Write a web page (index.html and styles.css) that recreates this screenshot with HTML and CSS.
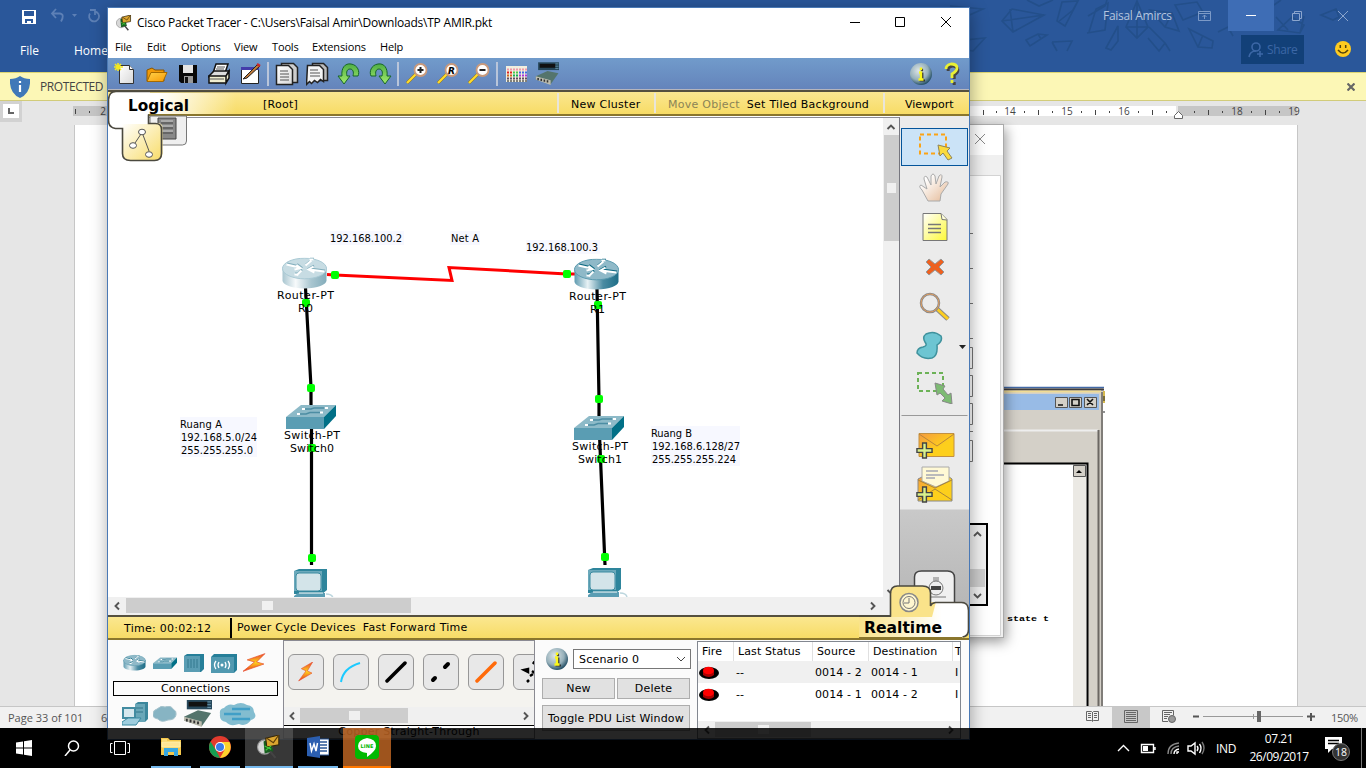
FILE: index.html
```html
<!DOCTYPE html>
<html lang="en">
<head>
<meta charset="utf-8">
<title>Cisco Packet Tracer</title>
<link rel="stylesheet" href="styles.css">
</head>
<body>
<svg class="defs" aria-hidden="true">
  <defs>
    <linearGradient id="gBody" x1="0" x2="1"><stop offset="0" stop-color="#5f9bb0"/><stop offset=".3" stop-color="#e8f2f5"/><stop offset=".65" stop-color="#4a8ba2"/><stop offset="1" stop-color="#1e6e87"/></linearGradient>
    <linearGradient id="gBodyLight" x1="0" x2="1"><stop offset="0" stop-color="#a9c6d0"/><stop offset=".3" stop-color="#f7fafb"/><stop offset=".65" stop-color="#a9c6d0"/><stop offset="1" stop-color="#84adbb"/></linearGradient>
    <linearGradient id="gYellow" x1="0" y1="0" x2="1" y2="1"><stop offset="0" stop-color="#fff"/><stop offset="1" stop-color="#f8dc68"/></linearGradient>
    <linearGradient id="gFade" x1="0" x2="1"><stop offset="0" stop-color="#fff"/><stop offset=".35" stop-color="#fff"/><stop offset="1" stop-color="#fff" stop-opacity="0"/></linearGradient>
    <linearGradient id="gFadeR" gradientUnits="userSpaceOnUse" x1="859" y1="0" x2="969" y2="0"><stop offset="0" stop-color="#fff" stop-opacity="0"/><stop offset=".3" stop-color="#fff" stop-opacity=".35"/><stop offset=".75" stop-color="#fff"/></linearGradient>
    <linearGradient id="gNote" x1="0" y1="0" x2="1" y2="1"><stop offset="0" stop-color="#fff"/><stop offset="1" stop-color="#fdf935"/></linearGradient>
    <linearGradient id="gHand" x1="0" y1="0" x2="1" y2="1"><stop offset=".2" stop-color="#fff"/><stop offset="1" stop-color="#e3b793"/></linearGradient>
    <linearGradient id="gMail" x1="0" y1="0" x2="1" y2="1"><stop offset="0" stop-color="#f59a40"/><stop offset=".6" stop-color="#fdcf1c"/></linearGradient>
    <linearGradient id="gFolder" x1="0" y1="0" x2="1" y2="1"><stop offset="0" stop-color="#ffd24a"/><stop offset="1" stop-color="#f79a05"/></linearGradient>
    <linearGradient id="gPaper" x1="0" y1="0" x2="1" y2="1"><stop offset="0" stop-color="#fff"/><stop offset="1" stop-color="#d8d8d8"/></linearGradient>
    <linearGradient id="gGreen" x1="0" y1="0" x2="0" y2="1"><stop offset="0" stop-color="#4fae45"/><stop offset="1" stop-color="#a4ec6c"/></linearGradient>
    <linearGradient id="gBolt" x1="0" y1="0" x2="0" y2="1"><stop offset="0" stop-color="#e8452a"/><stop offset=".5" stop-color="#ffd21e"/><stop offset="1" stop-color="#e8331a"/></linearGradient>
    <radialGradient id="gInfo" cx=".4" cy=".35" r=".7"><stop offset="0" stop-color="#dfe6e8"/><stop offset=".6" stop-color="#96b0ba"/><stop offset="1" stop-color="#123f58"/></radialGradient>
    <symbol id="info" viewBox="0 0 24 24"><circle cx="12" cy="12" r="11" fill="url(#gInfo)"/><path d="M12 6.200v2.600M10 11h2.300v7M9.500 18h5.500" stroke="#333" stroke-width="2.200" transform="translate(1 .5)" fill="none"/><path d="M12 5.400v2.800M10 10.500h2v7M9.500 17.500h5" stroke="#fbf81a" stroke-width="2.400" fill="none"/></symbol>
    <symbol id="router" viewBox="0 0 46 32"><path d="M1 10v13c0 4 9 8 22 8s22-4 22-8V10z" fill="url(#gBody)"/><ellipse cx="23" cy="11" rx="22" ry="10.300" fill="#8fb9c8" stroke="#5b9aaf"/><g fill="none" stroke="#0e6a82" stroke-width="2" transform="translate(.5 -1)"><path d="M5 7l13 3M15 7.500l4 3-6 1.500M24 8l6-5M28 2h4M28 12l15 2M32 9l-5 3 6 3M15 18l5-5M13 17h4"/></g><g fill="none" stroke="#fff" stroke-width="2"><path d="M5 7l13 3M15 7.500l4 3-6 1.500M24 8l6-5M28 2h4M28 12l15 2M32 9l-5 3 6 3M15 18l5-5M13 17h4"/></g></symbol>
    <symbol id="routerLight" viewBox="0 0 46 32"><path d="M1 10v13c0 4 9 8 22 8s22-4 22-8V10z" fill="url(#gBodyLight)"/><ellipse cx="23" cy="11" rx="22" ry="10.300" fill="#c7dce3" stroke="#a9c9d4"/><g fill="none" stroke="#84b0be" stroke-width="2" transform="translate(.5 -1)"><path d="M5 7l13 3M15 7.500l4 3-6 1.500M24 8l6-5M28 2h4M28 12l15 2M32 9l-5 3 6 3M15 18l5-5M13 17h4"/></g><g fill="none" stroke="#fff" stroke-width="2"><path d="M5 7l13 3M15 7.500l4 3-6 1.500M24 8l6-5M28 2h4M28 12l15 2M32 9l-5 3 6 3M15 18l5-5M13 17h4"/></g></symbol>
    <symbol id="switch" viewBox="0 0 50 25"><path d="M0 12L15 0h35L38 12z" fill="#8dbac8"/><path d="M0 12h38v12H0z" fill="#5a9db3"/><path d="M38 12L50 0v11L38 24z" fill="#017087"/><path d="M17 4h8l3-1h10M12 9h8l4-1.500h10" stroke="#4c8da3" stroke-width="1.500" fill="none"/><path d="M16 4h3M39 3h3M11 9h3M34 7.500h3" stroke="#fff" stroke-width="2.200"/></symbol>
    <symbol id="pc" viewBox="0 0 40 30"><path d="M0 2l5-2h28v21l-5 4H0z" fill="#2e859c"/><path d="M0 2h28v20H0z" fill="#6ca9bb"/><rect x="2" y="4" width="25" height="18" rx="3" fill="#d3e4e9" stroke="#3c8ba1"/><path d="M0 27l4-3h27v5H0z" fill="#5a9db3"/><path d="M5 24h24" stroke="#fff"/><path d="M32 25q6 0 7 4" stroke="#bcd6de" fill="none" stroke-width="1.500"/></symbol>
    <symbol id="bolt" viewBox="0 0 24 18"><path d="M22 0L5 6l7 2L1 17l20-7-7-2z" fill="url(#gBolt)" stroke="#e8502d" stroke-width=".7"/></symbol>
    <symbol id="ptLogo" viewBox="0 0 22 22"><circle cx="7" cy="11" r="6.500" fill="#d8d8d8" stroke="#999"/><path d="M6 6l6-3 3 12-8 2z" fill="#185f20"/><path d="M8 3l12-3v9L9 11z" fill="#dba52f" stroke="#35270a"/><path d="M9 3l6 4 5-7" fill="none" stroke="#5c3d08"/><path d="M12 15l5 6" stroke="#444" stroke-width="2"/><path d="M7 10l6 3M8 14l5-4" stroke="#41d33a"/></symbol>
    <symbol id="rack" viewBox="0 0 32 30"><path d="M4 0h27v10H4z" fill="#26475a"/><path d="M6 2h20v5H6z" fill="#111"/><path d="M26 2h4M26 5h4M26 8h4" stroke="#6a98ad" stroke-width="1"/><path d="M1 18l15-7 14 3-10 14L1 22z" fill="#54746c"/><path d="M1 18l19 5v6L1 22z" fill="#bdbdb0"/><path d="M4 20v3M8 21v3M12 22v3M16 23v3" stroke="#333" stroke-width="2"/></symbol>
    <symbol id="magnify" viewBox="0 0 24 24"><path d="M2 21l9-9" stroke="#8b6a10" stroke-width="3"/><path d="M2 21l9-9" stroke="#ffdc2b" stroke-width="2.300"/><circle cx="15.500" cy="8" r="6" fill="#fff" stroke="#c99a7c" stroke-width="1.800"/></symbol>
    <symbol id="plus" viewBox="0 0 18 18"><path d="M7 1h4v6h6v4h-6v6H7v-6H1V7h6z" fill="#d8f28c" stroke="#444" stroke-width="1.500"/></symbol>
    <symbol id="up" viewBox="0 0 10 10"><path d="M1.500 7L5 3.500 8.500 7" fill="none" stroke="#555" stroke-width="1.900"/></symbol>
  </defs>
</svg>

<div class="desktop">
  <section class="word">
    <header class="word-head">
      <svg class="crystals" width="426" height="56" viewBox="940 0 426 56"><g fill="none" stroke="#234f8a" stroke-width="1.600">
        <path d="M950 6l33 3-18 8M1002 21l10-12 32 6-31 17zM1002 21l42-6M1010 9l3 23M955 41l30-3-12 13-20-3M973 51l12-13M1027 0l12 6 14-6M1058 22l15-12 5-9-16 1-5 19 8 5 13-25M1088 16l17-10 2-6M1089 32l7-23 12-6-3 27-18 3M1126 27l11-26 11 26-11 11zM1137 1v37M1126 27h22M1150 10l15 17 14 4-7-18zM1165 27l7-14M1175 5l22-3 6 10-20 8zM1106 48l12-22v15l-7 9zM1149 27l16 16-6 8-11-13M1165 43l5 8M1026 40l12-6 9 1-17 11zM1038 34l3 5M1052 42l20-1-5 10M1052 42l5 9M1189 29l24 12-1 7-14-1zM1198 47l5-12M1218 32l10-5 5 9M1274 5l7-5M1278 30l22 3 4-8-12-8zM1276 17l12 13M1300 33l4-17M1321 15l15-6 3 8-6 3z"/></g></svg>
      <div class="word-title">
        <svg class="save" width="14" height="14" viewBox="0 0 14 14"><path d="M0 0h14v14H0z" fill="#fff"/><path d="M2 1h10v5H2zM3 9h8v4H9v-2H5v2H3z" fill="#2a579a"/></svg>
        <svg class="undo" width="60" height="16" viewBox="0 0 60 16" fill="none" stroke="#5d80b6" stroke-width="1.800"><path d="M6 1L2 5.500 6 10M2 5.500h8q5 1 1 8M40 5.500a5 5 0 1 0 5-2M45 7V2h-5"/><path d="M22 6h5l-2.500 3z" fill="#5d80b6" stroke="none"/></svg>
        <span class="user">Faisal Amircs</span>
        <svg class="ribbon-opt" width="13" height="10" viewBox="0 0 13 10" fill="none" stroke="#7c9ac7"><path d="M.5.500h12v9H.5zM.5 2.500h12M6.500 8V4M4.500 6l2-2 2 2"/></svg>
        <span class="min"><i></i></span>
        <svg class="restore" width="10" height="10" viewBox="0 0 10 10" fill="none" stroke="#8ba5cd"><path d="M.5 2.500h7v7h-7zM2.500 2.500v-2h7v7h-2"/></svg>
        <svg class="wclose" width="10" height="10" viewBox="0 0 10 10" stroke="#8ba5cd"><path d="M0 0l10 10M10 0L0 10"/></svg>
      </div>
      <div class="word-tabs">
        <span class="tab-file">File</span><span class="tab-home">Home</span>
        <span class="share"><svg width="16" height="16" viewBox="0 0 16 16" fill="none" stroke="#3c67a6" stroke-width="1.600"><circle cx="8" cy="5" r="4"/><path d="M1 15q1-6 7-6M9 12h6M12 9v6"/></svg>Share</span>
        <svg class="smile" width="16" height="16" viewBox="0 0 16 16"><circle cx="8" cy="8" r="8" fill="#ffcb1f"/><path d="M5.300 4v3M10.700 4v3M3 9q5 6 10 0" fill="none" stroke="#54430c" stroke-width="1.500"/></svg>
      </div>
    </header>
    <div class="protected">
      <svg width="20" height="22" viewBox="0 0 20 22"><path d="M10 0q4 3 10 3 1 14-10 19Q-1 17 0 3q6 0 10-3z" fill="#4078b8"/><path d="M10 5v2M10 9v7" stroke="#fff" stroke-width="2.200"/></svg>
      <span>PROTECTED</span>
      <svg class="bar-x" width="8" height="8" viewBox="0 0 8 8" stroke="#666" stroke-width="2.200"><path d="M.5.500l7 7M7.500.500l-7 7"/></svg>
    </div>
    <div class="ruler-row">
      <div class="tabstop"><span><svg width="6" height="6"><path d="M1 0v5h5" fill="none" stroke="#666" stroke-width="2"/></svg></span></div>
      <svg width="1344" height="24" viewBox="22 101 1344 24">
        <path d="M73 106h104v10H73zM1178 106h119v10h-119z" fill="#c6c6c6"/><path d="M177 106h999v10H177z" fill="#fff"/>
        <path d="M75.500 109v5M983.500 110v5M1038.500 110v5M1095.500 110v5M1152.500 110v5M1208.500 110v5M1265.500 110v5" stroke="#444"/>
        <path d="M89 111h1v2h-1zM996 111h1v2h-1zM1024 111h1v2h-1zM1052 111h1v2h-1zM1081 111h1v2h-1zM1109 111h1v2h-1zM1138 111h1v2h-1zM1166 111h1v2h-1zM1194 111h1v2h-1zM1222 111h1v2h-1zM1251 111h1v2h-1zM1279 111h1v2h-1z" fill="#444"/>
        <g class="ruler-num"><text x="103" y="115">2</text><text x="1010" y="115">14</text><text x="1067" y="115">15</text><text x="1124" y="115">16</text><text x="1237" y="115">18</text><text x="1294" y="115">19</text></g>
        <path d="M1174.500 118.500v-3l4-4 4 4v3z" fill="#fff" stroke="#666"/>
      </svg>
    </div>
    <div class="doc">
      <div class="page">
        <svg class="figure" width="202" height="320" viewBox="903 386 202 320">
          <path d="M903 388h200v318H903z" fill="#d4d0c8"/><path d="M903 387.500h201" stroke="#4269a7" stroke-width="1.500"/><path d="M903 389.500h201" stroke="#403c3c" stroke-width="2"/><path d="M903 391.500h198" stroke="#f0dc95" stroke-width="2"/>
          <path d="M903 394h196v16H903z" fill="#98bbe6"/><path d="M903 430.500h195" stroke="#eee" stroke-width="2"/><path d="M1098.500 430v276" stroke="#6b6763" stroke-width="2"/><path d="M1102 392v314" stroke="#807d79" stroke-width="2"/>
          <path d="M903 464h184v242H903z" fill="#fff"/><path d="M1073 464h13v242h-13z" fill="#ebe9e4"/><path d="M903 463.500h184.500V706" fill="none" stroke="#000" stroke-width="2"/>
          <g fill="#d4d0c8" stroke="#555"><path d="M1055.500 397.500h12v10h-12zM1069.500 397.500h12v10h-12zM1084.500 397.500h12v10h-12zM1073.500 465.500h12v11h-12z"/></g>
          <path d="M1058 405h5M1072 399.500h7v6h-7zM1087 399l6 6M1093 399l-6 6" stroke="#111" stroke-width="1.600" fill="none"/><path d="M1076 473h6l-3-3z"/>
          <path d="M1104 391v12" stroke="#d6b950" stroke-width="2"/><path d="M1104 396v5M1104 411v2" stroke="#222"/>
          <text class="mono" x="1007" y="621" textLength="42" lengthAdjust="spacingAndGlyphs">state t</text>
        </svg>
      </div>
    </div>
    <footer class="word-status">
      <span class="pg">Page 33 of 101</span><span class="six">6</span>
      <svg class="views" width="276" height="21" viewBox="1052 707 276 21"><path d="M1112 707h38v21h-38z" fill="#c8c8c8"/>
        <g fill="none" stroke="#666"><path d="M1086.500 711.500h5l1 1 1-1h5v9h-5l-1 1-1-1h-5zM1092.500 712v9M1088 713.500h3M1088 715.500h3M1088 717.500h3M1094 713.500h3M1094 715.500h3M1094 717.500h3"/><path d="M1124.500 710.500h13v12h-13zM1126 712.500h10M1126 714.500h10M1126 716.500h10M1126 718.500h10M1126 720.500h10"/><path d="M1168 721.500h-5.500v-11h11v5M1164 712.500h8M1164 714.500h6M1164 716.500h4M1164 718.500h3"/></g><circle cx="1172" cy="719" r="3.500" fill="#999" stroke="#666"/>
        <path d="M1193 716.500h6M1307 716.500h8M1311 713v8" stroke="#555" stroke-width="2"/><path d="M1203 716.500h100M1253.500 714v5" stroke="#999"/><path d="M1257 711h4v11h-4z" fill="#666"/></svg>
      <span class="zoom">150%</span>
    </footer>
  </section>

  <section class="dialog">
    <svg width="93" height="512" viewBox="910 125 93 512"><path d="M910 125h93v30h-93z" fill="#fff"/><path d="M910 155h93v482h-93z" fill="#f0f0f0"/><path d="M910 175.500h90.500v460H910" fill="#fff" stroke="#d3d3d3"/><path d="M975 134l10 10M985 134l-10 10" stroke="#888"/>
      <g stroke="#777" fill="none"><path d="M960 233.500h13M960 268.500h13M960 303.500h13M960 338.500h13M960 431.500h13"/><path d="M960 347.500h12.500v21H960M960 375.500h12.500v21H960M960 403.500h12.500v21H960M960 440.500h12.500v21H960"/></g>
      <path d="M960 524h27v81h-27" fill="#f0f0f0" stroke="#000" stroke-width="2"/><path d="M970 569h15v18h-15z" fill="#cdcdcd"/><path d="M974 536l3.500-3.500 3.500 3.500M974 594l3.500 3.500 3.500-3.500" stroke="#555" stroke-width="1.800" fill="none"/></svg>
  </section>

  <main class="tracer">
    <div class="t-title"><svg width="16" height="16"><use href="#ptLogo"/></svg><span class="t-name">Cisco Packet Tracer - C:\Users\Faisal Amir\Downloads\TP AMIR.pkt</span>
      <svg class="t-ctl" width="102" height="12" viewBox="0 0 102 12" fill="none" stroke="#000"><path d="M0 6.500h10M45.500 1.500h9v9h-9zM91 1l10 10M101 1L91 11"/></svg></div>
    <nav class="t-menu"><span class="m1">File</span><span class="m2">Edit</span><span class="m3">Options</span><span class="m4">View</span><span class="m5">Tools</span><span class="m6">Extensions</span><span class="m7">Help</span></nav>
    <div class="t-tools">
      <svg viewBox="0 0 24 24"><path d="M5.500 3.500h10l4 4v14h-14z" fill="url(#gPaper)" stroke="#333"/><path d="M15.500 3.500v4h4" fill="#fff" stroke="#333"/><path d="M4 1v8M0 5h9M1 2l6 6M7 2L1 8" stroke="#f5e91e" stroke-width="1.600"/></svg>
      <svg viewBox="0 0 24 24"><path d="M2 19V8l5-2 3 2h9v11z" fill="#f29a07" stroke="#8a5500"/><path d="M2 19.500l4-9h16l-4 9z" fill="url(#gFolder)" stroke="#a66a00"/></svg>
      <svg viewBox="0 0 24 24"><path d="M3 3h18v18H5l-2-2z" fill="#080808"/><path d="M7 3h10v8H7z" fill="#e4e4e4"/><path d="M8 14h9v7H8z" fill="#999"/><path d="M9 15h3v6H9z" fill="#111"/></svg>
      <svg viewBox="0 0 24 24"><path d="M6 11l3-9h12l-3 9z" fill="#fff" stroke="#111" stroke-width="1.500"/><path d="M2 14l5-5h15l-3 6H2z" fill="#ddd" stroke="#111" stroke-width="1.500"/><path d="M2 14h17v7H2zM19 14l3-5v7l-3 5z" fill="#f0eed0" stroke="#111" stroke-width="1.500"/><path d="M10 5h8M9 7h8M3 17h14" stroke="#555"/></svg>
      <svg viewBox="0 0 24 24"><path d="M3.500 5.500h17v16h-17z" fill="#fff" stroke="#222"/><path d="M3 5h18v3H3z" fill="#433caa"/><path d="M6 16L19 3l3 1L9 16l-4 1z" fill="#c17a3a" stroke="#222"/><path d="M19 2l3 2" stroke="#cd2929" stroke-width="2.500"/></svg>
      <i class="sep"></i>
      <svg viewBox="0 0 24 24"><path d="M6.500 1.500h12l4 4v15h-16z" fill="#ccc" stroke="#222" stroke-width="1.500"/><path d="M1.500 3.500h12l4 4v15h-16z" fill="url(#gPaper)" stroke="#222" stroke-width="1.500"/><path d="M5 9h8M5 12h9M5 15h9M5 18h9" stroke="#555"/></svg>
      <svg viewBox="0 0 24 24"><path d="M6.500 1.500h11l4 4v13h-15z" fill="#bbb" stroke="#222" stroke-width="1.500"/><path d="M1.500 3.500h12l4 4v12l-3-2-3 3-3-2-3 3-2-2-3 3z" fill="#f4f4f4" stroke="#222" stroke-width="1.500"/><path d="M4 8h8M4 11h10M4 14h10" stroke="#555"/></svg>
      <svg viewBox="0 0 24 24"><path d="M1 14h4C4 6 8 1 14 2c7 1 9 8 7 12h-5c1-4 0-7-3-7s-4 3-3 7h3l-6 8z" fill="url(#gGreen)" stroke="#17652a"/></svg>
      <svg viewBox="0 0 24 24"><path d="M23 14h-4C20 6 16 1 10 2 3 3 1 10 3 14h5c-1-4 0-7 3-7s4 3 3 7h-3l6 8z" fill="url(#gGreen)" stroke="#17652a"/></svg>
      <i class="sep"></i>
      <svg viewBox="0 0 24 24"><use href="#magnify"/><path d="M12.500 8h6M15.500 5v6" stroke="#222" stroke-width="2"/></svg>
      <svg viewBox="0 0 24 24"><use href="#magnify"/><text class="zr" x="12" y="11.500">R</text></svg>
      <svg viewBox="0 0 24 24"><use href="#magnify"/><path d="M12.500 8h6" stroke="#222" stroke-width="2"/></svg>
      <i class="sep"></i>
      <svg viewBox="0 0 24 24"><path d="M2 4h21v16H2z" fill="#f1efdf"/><g stroke-width="2" stroke-dasharray="2 1"><path d="M3 7.500h20" stroke="#ef98a9"/><path d="M3 10.500h6" stroke="#e22020"/><path d="M9 10.500h6" stroke="#4ec94a"/><path d="M15 10.500h8" stroke="#4169e1"/><path d="M3 13.500h6" stroke="#cd651e"/><path d="M9 13.500h6" stroke="#11ad55"/><path d="M15 13.500h8" stroke="#a637d9"/><path d="M3 16.500h20" stroke="#624a63"/></g><path d="M3 19h20" stroke="#111" stroke-dasharray="2 1"/></svg>
      <svg viewBox="0 0 24 24"><use href="#rack" x="0" y="0" width="25" height="24"/></svg>
      <svg class="help-first" viewBox="0 0 24 24"><use href="#info"/></svg>
      <svg viewBox="0 0 24 24"><path d="M7 8V5q5-4 9 0 2 4-3 7v4M13 19v3" fill="none" stroke="#444" stroke-width="3" transform="translate(1.200 1)"/><path d="M6 7q0-4 5-5 6 0 6 4 0 3-5 6v4M12 18v3" fill="none" stroke="#e9f034" stroke-width="2.800"/></svg>
    </div>
    <div class="t-bar top"><span class="root">[Root]</span><span class="b-cluster">New Cluster</span><span class="b-move"><em>Move Object</em>Set Tiled Background</span><span class="b-view">Viewport</span></div>
    <div class="workspace">
      <div class="canvas-col">
        <div class="canvas-row">
        <svg class="canvas" width="775" height="479" viewBox="108 118 775 479">
          <g fill="#f7f8ff"><path d="M330 231h74v14h-74zM450 231h30v14h-30zM526 240h74v14h-74zM180 417h77v40h-77zM651 426h89v40h-89z"/></g>
          <path d="M327 274.500l8 .5 117 5.500-3-13 118 6.500h9" fill="none" stroke="#f00" stroke-width="3"/>
          <path d="M305.500 288l5.500 99v18M311.500 425v140M597 289l2 110v20M599.500 435l5.500 130" fill="none" stroke="#000" stroke-width="3.200"/>
          <use href="#routerLight" x="281.500" y="257.500" width="46" height="32"/><use href="#router" x="573.500" y="258.500" width="46" height="32"/>
          <use href="#switch" x="286" y="405" width="50" height="25"/><use href="#switch" x="574" y="416" width="50" height="25"/>
          <use href="#pc" x="294" y="569" width="40" height="30"/><use href="#pc" x="588" y="568" width="40" height="30"/>
          <g fill="#0f0"><rect x="331" y="271" width="8" height="8" rx="2"/><rect x="563" y="270" width="8" height="8" rx="2"/><rect x="302" y="299" width="8" height="8" rx="2"/><rect x="307" y="384" width="8" height="8" rx="2"/><rect x="308" y="444" width="8" height="8" rx="2"/><rect x="308" y="554" width="8" height="8" rx="2"/><rect x="594" y="301" width="8" height="8" rx="2"/><rect x="595" y="395" width="8" height="8" rx="2"/><rect x="597" y="455" width="8" height="8" rx="2"/><rect x="601" y="553" width="8" height="8" rx="2"/></g>
          <g class="dev"><text x="277" y="299" textLength="57">Router-PT</text><text x="298" y="312" textLength="15">R0</text><text x="569" y="300" textLength="57">Router-PT</text><text x="590" y="313" textLength="15">R1</text><text x="284" y="439" textLength="56">Switch-PT</text><text x="290" y="452" textLength="44">Switch0</text><text x="572" y="450" textLength="56">Switch-PT</text><text x="578" y="463" textLength="44">Switch1</text></g>
          <g class="note"><text x="330" y="242" textLength="72">192.168.100.2</text><text x="451" y="242" textLength="28">Net A</text><text x="526" y="251" textLength="72">192.168.100.3</text><text x="180" y="428" textLength="42">Ruang A</text><text x="181" y="441" textLength="76">192.168.5.0/24</text><text x="181" y="454" textLength="72">255.255.255.0</text><text x="651" y="437" textLength="41">Ruang B</text><text x="652" y="450" textLength="88">192.168.6.128/27</text><text x="652" y="463" textLength="84">255.255.255.224</text></g>
        </svg>
        <div class="vscroll"><svg width="10" height="10"><use href="#up"/></svg><div class="vthumb"><i></i></div><svg class="flip" width="10" height="10"><use href="#up"/></svg></div>
        </div>
        <div class="hscroll"><svg class="left" width="10" height="10"><use href="#up"/></svg><div class="hthumb"><i></i></div><svg class="right" width="10" height="10"><use href="#up"/></svg></div>
      </div>
      <aside class="side">
        <button class="sel"><svg width="40" height="32" viewBox="0 0 40 32"><path d="M5 3.500h26v19H5z" fill="none" stroke="#fba315" stroke-width="2" stroke-dasharray="4 3"/><path d="M23 14l12 3-3 3 5 7-4 2-5-7-3 3z" fill="#fbdb3d" stroke="#8f845a"/></svg></button>
        <button><svg width="40" height="32" viewBox="0 0 40 32"><path d="M13 30L7 19q-4-4-1-5l6 4-3-10q0-4 3-2l4 8V5q2-4 4 0l1 8 3-8q3-3 3 1l-2 10 5-5q4-1 3 2l-7 10-1 7z" fill="url(#gHand)" stroke="#aaa"/></svg></button>
        <button><svg width="40" height="32" viewBox="0 0 40 32"><path d="M8 2.500h18l6 6v21H8z" fill="url(#gNote)" stroke="#777"/><path d="M26 2.500l1 6 5 .5" fill="#ffd" stroke="#777"/><path d="M13 13.500h13M13 17.500h13M13 21.500h13" stroke="#777" stroke-width="1.500"/></svg></button>
        <button><svg width="40" height="32" viewBox="0 0 40 32"><path d="M14 8l6 5 6-5 3 3-5 5 5 5-3 3-6-5-6 5-3-3 5-5-5-5z" fill="#ed6120" stroke="#999"/></svg></button>
        <button><svg width="40" height="32" viewBox="0 0 40 32"><path d="M21 17l12 11" stroke="#8a8a8a" stroke-width="5"/><path d="M21 17l12 11" stroke="#fdce20" stroke-width="3"/><circle cx="15" cy="12" r="9" fill="none" stroke="#888" stroke-width="2.500"/><circle cx="15" cy="12" r="9" fill="none" stroke="#df9d61"/></svg></button>
        <button class="shape"><svg width="62" height="32" viewBox="0 0 62 32"><path d="M13 3q8-4 15 2 2 5-4 9 1 11-5 13-9 2-15-5 0-5 6-6 5-1 2-5-3-5 1-8z" fill="#6dc5d2" stroke="#3f929d" stroke-width="1.500"/><path d="M46 14h7l-3.500 4z" fill="#222"/></svg></button>
        <button><svg width="40" height="34" viewBox="0 0 40 34"><path d="M3 3h25v18H3z" fill="none" stroke="#6cb257" stroke-width="2" stroke-dasharray="4 3"/><path d="M20 13l10 3-2 3 5 6 3-2 1 11-10-3 3-3-5-5-3 2z" fill="#7dbb73" stroke="#888"/></svg></button>
        <button class="mail pdu-simple"><svg width="40" height="32" viewBox="0 0 40 32"><path d="M4 3.500h35v23H4z" fill="url(#gMail)" stroke="#c19042"/><path d="M4 4l18 12L39 4" fill="none" stroke="#b8863b"/><use href="#plus" x="1" y="12" width="17" height="17"/></svg></button>
        <button class="mail pdu-complex"><svg width="40" height="40" viewBox="0 0 40 40"><path d="M3 14l10-5h17l7 5v22H3z" fill="url(#gMail)" stroke="#888"/><path d="M7 2h27v14l-13 6-14-6z" fill="#fff9d5" stroke="#aaa"/><path d="M11 6h12M11 10h18M11 13h9" stroke="#bbb" stroke-width="2"/><path d="M3 35l17-11 17 11M3 15l17 8 17-8" fill="none" stroke="#a9853b"/><use href="#plus" x="1" y="21" width="17" height="17"/></svg></button>
      </aside>
    </div>
    <div class="t-bar bottom"><span class="time">Time: 00:02:12</span><span class="power">Power Cycle Devices</span><span>Fast Forward Time</span></div>
    <div class="lower">
      <div class="families">
        <div class="fam-row r1">
          <svg width="23" height="18"><use href="#router"/></svg><svg width="24" height="13"><use href="#switch"/></svg>
          <svg width="20" height="18" viewBox="0 0 20 18"><path d="M0 2l3-2h17v15l-3 3H0z" fill="#267f99"/><path d="M0 2h16v16H0z" fill="#5a9db3"/><path d="M4 5v9M7 5v9M10 5v9M13 5v9" stroke="#33788e"/></svg>
          <svg width="26" height="19" viewBox="0 0 26 19"><path d="M0 3l3-3h23v16l-3 3H0z" fill="#267f99"/><path d="M0 3h23v16H0z" fill="#5199b0"/><path d="M5 7q-3 4 0 8M8 8q-2 3 0 6M17 7q3 4 0 8M14 8q2 3 0 6" fill="none" stroke="#fff" stroke-width="1.300"/><circle cx="11" cy="11" r="1.500" fill="#fff"/></svg>
          <svg class="fam-bolt" width="25" height="20"><use href="#bolt"/></svg>
        </div>
        <div class="fam-name">Connections</div>
        <div class="fam-row r2">
          <svg width="26" height="24" viewBox="0 0 26 24"><path d="M13 2l3-2h10v17l-3 3H13z" fill="#3c879c"/><path d="M13 2h10v18H13z" fill="#69a7b8"/><path d="M1 6h12v10H1z" fill="#d6e8ee" stroke="#438ca1" stroke-width="2"/><path d="M0 20l6-4h13l-5 7H0z" fill="#9ecddd" stroke="#3b89a0"/><path d="M14 6h7M14 10h7" stroke="#317489"/></svg>
          <svg width="24" height="16" viewBox="0 0 24 16"><path d="M4 3q4-4 8-2 6-2 8 2 4 2 3 6-1 5-8 5-7 3-10-1-6-1-5-5 0-4 4-5z" fill="#87b4c3" stroke="#a7c3cc"/></svg>
          <svg width="32" height="28"><use href="#rack"/></svg>
          <svg width="37" height="23" viewBox="0 0 37 23"><path d="M5 5q4-5 10-3 7-4 13 0 7 1 7 7 4 6-3 8-5 7-12 4-9 3-13-2-7-1-6-8-1-5 4-6z" fill="#83bdd0"/><path d="M13 6h18M5 11h17M13 16h18" stroke="#419fc7" stroke-width="2.500"/></svg>
        </div>
      </div>
      <div class="devices">
        <div class="dev-row">
          <span class="key"><svg width="16" height="20" viewBox="0 0 24 18" preserveAspectRatio="none"><use href="#bolt"/></svg></span>
          <span class="key"><svg width="22" height="22"><path d="M1 21Q3 7 20 2" fill="none" stroke="#1ccaff" stroke-width="2"/></svg></span>
          <span class="key"><svg width="22" height="22"><path d="M2 20L20 2" stroke="#000" stroke-width="3.500" stroke-linecap="round"/></svg></span>
          <span class="key"><svg width="22" height="22"><path d="M3 19l2-2M15 6l3-3" stroke="#000" stroke-width="4" stroke-linecap="round"/></svg></span>
          <span class="key"><svg width="22" height="22"><path d="M2 20L20 2" stroke="#ff6a0a" stroke-width="3.500" stroke-linecap="round"/></svg></span>
          <span class="key"><svg width="22" height="22"><path d="M4 9l4-1v3zM13 3l2-3M10 15l3-2M7 21l2-2M12 10l4 3" stroke="#000" stroke-width="2.500"/></svg></span>
        </div>
        <div class="hscroll small"><svg class="left" width="10" height="10"><use href="#up"/></svg><div class="hthumb"><i></i></div><svg class="right" width="10" height="10"><use href="#up"/></svg></div>
        <div class="copper">Copper Straight-Through</div>
      </div>
      <div class="scenario">
        <div class="sc-row"><svg width="24" height="24"><use href="#info"/></svg><div class="combo"><span>Scenario 0</span><svg width="10" height="6"><path d="M1 1l4 4 4-4" fill="none" stroke="#444"/></svg></div></div>
        <div class="sc-btns"><span class="btn">New</span><span class="btn">Delete</span></div>
        <span class="btn wide">Toggle PDU List Window</span>
      </div>
      <div class="pdu">
        <div class="pdu-row head"><span>Fire</span><span>Last Status</span><span>Source</span><span>Destination</span><span>T</span></div>
        <div class="pdu-row odd"><span><svg width="20" height="13" viewBox="0 0 20 13"><ellipse cx="10" cy="7" rx="10" ry="6"/><path d="M4 5v4q6 4 11 0V5z" fill="#a00"/><ellipse cx="9.500" cy="4.500" rx="5.500" ry="3.800" fill="#f00"/></svg></span><span>--</span><span>0014 - 2</span><span>0014 - 1</span><span>I</span></div>
        <div class="pdu-row"><span><svg width="20" height="13" viewBox="0 0 20 13"><ellipse cx="10" cy="7" rx="10" ry="6"/><path d="M4 5v4q6 4 11 0V5z" fill="#a00"/><ellipse cx="9.500" cy="4.500" rx="5.500" ry="3.800" fill="#f00"/></svg></span><span>--</span><span>0014 - 1</span><span>0014 - 2</span><span>I</span></div>
        <div class="hscroll small"><svg class="left" width="10" height="10"><use href="#up"/></svg><div class="hthumb"><i></i></div><svg class="right" width="10" height="10"><use href="#up"/></svg></div>
      </div>
    </div>

    <svg class="logical" width="172" height="74" viewBox="108 90 172 74">
      <path d="M150 116h36.500v25q0 4-4 4H150z" fill="#efefef" stroke="#777"/><path d="M158 118h18v21h-18z" fill="#888" stroke="#444"/><path d="M161 123h12M161 128h12M161 133h12" stroke="#666" stroke-width="2"/><path d="M161 121h12M161 126h12M161 131h12" stroke="#aaa" stroke-width="2"/>
      <path d="M116 93h120v21H116z" fill="url(#gFade)"/>
      <path d="M108 99q1-7 8-7h34v22h-2v14h-26q-13 2-14-7z" fill="#fff"/>
      <path d="M122.500 124h26v-1h9q5 0 5 5v25q0 7-7 7h-25q-8 0-8-8z" fill="url(#gYellow)"/>
      <path d="M280 91.500H116q-7 0-7.500 8v21q0 7 7 8h7v25q0 7 8 7h24q7 0 7-7v-24q0-6-6-6h-7v-9" fill="none" stroke="#4b493f" stroke-width="1.600"/>
      <g fill="none" stroke="#555"><path d="M141 134l-6 9M143 135l6 16"/><ellipse cx="142" cy="132" rx="3.500" ry="2.800" fill="#fff"/><ellipse cx="133" cy="145.500" rx="3.500" ry="2.800" fill="#fff"/><ellipse cx="149" cy="154.500" rx="3.500" ry="2.800" fill="#fff"/></g>
      <text class="tabname" x="128" y="110.500" textLength="61" lengthAdjust="spacingAndGlyphs">Logical</text>
    </svg>
    <svg class="realtime" width="110" height="71" viewBox="859 569 110 71">
      <path d="M914.500 603v-26q0-6 7-6h26q7 0 7 7v25" fill="#f0f0f0" stroke="#444" stroke-width="1.500"/><circle cx="936" cy="588" r="7" fill="#eee" stroke="#777"/><path d="M933 580h6M933 578h6" stroke="#777"/><path d="M931 586h10v4h-10z" fill="#444"/><path d="M926 597h20" stroke="#777"/>
      <path d="M891 617v-23q0-8 7-8h25q7 0 7 7v9h32q7 1 7 8v20q0 8-7 8H859v-21z" fill="#fae38a"/><path d="M859 617h73l4-15h26q7 0 7 8v20q0 7-7 7H859z" fill="url(#gFadeR)"/>
      <path d="M859 616h31.500V594q0-8 7-8h25q8 0 8 7v13q1-3 5-3.500h26q7 0 7 8v19q0 7-6 7.500" fill="none" stroke="#4b493f" stroke-width="1.600"/><path d="M859 638h103" stroke="#8a762d" stroke-width="2"/>
      <circle cx="909" cy="602.500" r="9" fill="#fff6cf" stroke="#888" stroke-width="1.500"/><circle cx="909" cy="602.500" r="6" fill="none" stroke="#777"/><path d="M909 598v5h-5" fill="none" stroke="#777"/>
      <text class="tabname" x="864" y="632.500" textLength="78" lengthAdjust="spacingAndGlyphs">Realtime</text>
    </svg>
  </main>

  <footer class="taskbar">
    <span class="tb"><svg width="16" height="16"><path d="M0 2.500l7-1V7.500H0zM8 1.300L16 0v7.500H8zM0 8.500h7v6l-7-1zM8 8.500h8V16l-8-1.300z" fill="#fff"/></svg></span>
    <span class="tb"><svg width="16" height="16" fill="none" stroke="#fff" stroke-width="1.500"><circle cx="9.500" cy="6" r="5"/><path d="M6 10l-5 6"/></svg></span>
    <span class="tb"><svg width="20" height="16" fill="none" stroke="#fff"><path d="M4.500 1.500h11v13h-11zM2.500 3.500h-2v9h2M17.500 3.500h2v9h-2"/></svg></span>
    <span class="tb run b1"><svg width="22" height="20" viewBox="0 0 22 20"><path d="M1 1h7l2 2h11v15H1z" fill="#f5c84c"/><path d="M2 3h5M2 5h18v5H2z" stroke="#fff0a9" fill="#ffe594"/><path d="M4 19v-8h14v8h-4v-4H8v4z" fill="#37a7e2"/></svg></span>
    <span class="tb run b2"><svg width="22" height="22" viewBox="0 0 22 22"><circle cx="11" cy="11" r="11" fill="#e33b2e"/><path d="M1.500 5.500l5 8L11 22A11 11 0 0 1 1.500 5.500z" fill="#159e51"/><path d="M20.500 6H11l4.500 8L11 22a11 11 0 0 0 9.500-16z" fill="#fdd22d"/><circle cx="11" cy="11" r="5" fill="#fff"/><circle cx="11" cy="11" r="4" fill="#3b7bea"/></svg></span>
    <span class="tb run active"><svg width="24" height="24"><use href="#ptLogo"/></svg></span>
    <span class="tb run b3"><svg width="22" height="22" viewBox="0 0 22 22"><path d="M11 3h11v16H11z" fill="#fff" stroke="#2b5797"/><path d="M13 6h7M13 9h7M13 12h7M13 15h7" stroke="#2b5797" stroke-width="1.500"/><path d="M0 2l13-2v22L0 20z" fill="#2b5eb0"/><path d="M3 7l1.500 8L7 8l2 7 1.500-8" fill="none" stroke="#fff" stroke-width="1.500"/></svg></span>
    <span class="tb run line"><svg width="24" height="24" viewBox="0 0 24 24"><rect width="24" height="24" rx="4" fill="#01b901"/><path d="M12 3q9 1 9 8 0 5-9 11v-4q-9-1-9-7t9-8z" fill="#fff"/><text class="linetext" x="5.500" y="13" textLength="13">LINE</text></svg></span>
    <div class="tray">
      <svg width="92" height="16" viewBox="1116 740 92 16" fill="none" stroke="#fff" stroke-width="1.400"><path d="M1117 751l5.500-5.500 5.500 5.500M1140.500 744.500h12v8h-12zM1154 747v3"/><path d="M1142 746h5v5h-5z" fill="#fff" stroke="none"/><g stroke="#888"><path d="M1167 754q0-10 11-11M1170 754q0-7 8-8"/></g><path d="M1173 754q0-4 5-5M1176 754v-2h2"/><path d="M1187 746h3l4-3v11l-4-3h-3zM1196 746q2 2 0 5M1198.500 744q3 4 0 9"/><path d="M1201 742q4 6 0 12" stroke="#777"/></svg>
      <span class="lang">IND</span>
      <span class="clock"><span>07.21</span><span>26/09/2017</span></span>
      <svg class="notif" width="26" height="26" viewBox="0 0 26 26"><path d="M0 1h17v12H7l-4 4v-4H0z" fill="#fff"/><path d="M3 4.500h11M3 7.500h11" stroke="#000" stroke-width="1.300"/><circle cx="16" cy="16" r="8.500" fill="#333" stroke="#777"/><text class="ntext" x="10" y="20" textLength="12">18</text></svg>
      <i class="peek"></i>
    </div>
  </footer>
</div>
</body>
</html>
```
FILE: styles.css
```css
* { box-sizing: border-box; }
body { margin: 0; width: 1366px; height: 768px; overflow: hidden; font: 12px "Open Sans", "Noto Sans", sans-serif; color: #000; }
svg { display: block; flex: none; }
i, em { font-style: normal; }
.defs { position: absolute; width: 0; height: 0; }
.desktop { position: relative; z-index: 0; width: 1366px; height: 768px; overflow: hidden; white-space: nowrap; background: #030405; }

/* Word window in the background */
.word { height: 728px; display: flex; flex-direction: column; background: #e6e6e6; }
.word-head { position: relative; height: 72px; background: #2a579a; flex: none; }
.crystals { position: absolute; right: 0; top: 0; }
.word-title, .word-tabs { position: relative; display: flex; align-items: center; height: 31px; }
.save { margin-left: 22px; margin-top: 2px; }
.undo { margin-left: 14px; }
.user { margin-left: 993px; width: 70px; color: #b5c5de; font-size: 12px; letter-spacing: -.3px; }
.ribbon-opt { margin-left: 25px; }
.min { margin-left: 17px; width: 46px; height: 31px; background: #3e6db5; display: flex; align-items: center; justify-content: center; }
.min i { width: 10px; height: 1px; background: #fff; }
.restore { margin-left: 18px; }
.wclose { margin-left: 36px; }
.word-tabs { height: 38px; color: #fff; font-size: 12px; }
.tab-file { margin-left: 20px; width: 54px; }
.tab-home { width: 60px; }
.share { margin-left: 1107px; width: 63px; height: 29px; margin-top: -1px; background: #124078; color: #3c67a6; display: flex; align-items: center; gap: 3px; padding-left: 7px; letter-spacing: -.4px; }
.smile { margin-left: 31px; margin-top: -2px; }
.protected { height: 29px; flex: none; background: #fcf7b6; border-top: 1px solid #dbd474; border-bottom: 1px solid #d2cc7a; display: flex; align-items: center; padding-left: 10px; color: #444; }
.protected span { margin-left: 10px; letter-spacing: -.4px; }
.bar-x { margin-left: auto; margin-right: 11px; }
.ruler-row { display: flex; height: 24px; flex: none; }
.tabstop { width: 22px; height: 21px; background: #d2d2d2; padding: 3px; display: flex; }
.tabstop span { width: 16px; height: 14px; background: #fff; display: flex; align-items: center; justify-content: center; }
.ruler-num { font: 10px "Open Sans", sans-serif; fill: #444; text-anchor: middle; }
.doc { flex: 1; padding-left: 74px; min-height: 0; }
.page { width: 1224px; height: 581px; background: #fff; border: solid #c6c6c6; border-width: 0 1px; padding: 261px 0 0 828px; }
.mono { font: bold 8px "Liberation Mono", monospace; }
.word-status { height: 22px; flex: none; border-top: 1px solid #c6c6c6; background: #f1f1f1; display: flex; align-items: center; font-size: 11px; color: #555; }
.pg { margin-left: 8px; width: 93px; }
.six { width: 10px; }
.views { margin-left: 941px; }
.zoom { margin-left: 3px; letter-spacing: -.3px; }

.dialog { position: absolute; left: 910px; top: 124px; width: 94px; height: 514px; border: 1px solid #aaa; border-left: 0; box-shadow: 2px 4px 12px rgba(0,0,0,.4); }

/* Packet Tracer window */
.tracer { position: absolute; left: 107px; top: 7px; width: 863px; height: 733px; border: 1px solid #4a79b5; background: #fff; box-shadow: 1px 4px 16px rgba(0,0,0,.35); display: flex; flex-direction: column; font: 11px "DejaVu Sans", sans-serif; }
.t-title { height: 29px; display: flex; align-items: center; padding-left: 8px; font: 12px "Open Sans", sans-serif; flex: none; }
.t-name { margin-left: 5px; width: 360px; letter-spacing: -.22px; }
.t-ctl { margin-left: 353px; margin-top: -2px; }
.t-menu { display: flex; height: 21px; padding-left: 7px; font: 11px/20px "Open Sans", sans-serif; letter-spacing: -.15px; flex: none; }
.m1 { width: 32px; } .m2 { width: 34px; } .m3 { width: 53px; } .m4 { width: 38px; } .m5 { width: 40px; } .m6 { width: 68px; }
.t-tools { height: 32px; flex: none; display: flex; align-items: center; background: linear-gradient(#719bcb, #6484bb); padding: 1px 0 0 2px; border-bottom: 1px solid #b5b5bd; }
.t-tools > svg { width: 24px; height: 24px; margin: 0 3.5px; }
.t-tools .sep { width: 2px; height: 24px; margin: 0 2px; background: #b9c5da; }
.t-tools .help-first { margin-left: 347px; }
.zr { font: italic bold 9px "DejaVu Sans", sans-serif; }
.t-bar { flex: none; display: flex; align-items: center; background: linear-gradient(#fbe790, #f7dc66); border-top: 2px solid #55503f; border-bottom: 2px solid #8a762d; letter-spacing: .27px; }
.t-bar.top { height: 26px; }
.root { margin-left: 155px; width: 294px; padding-top: 2px; }
.b-cluster, .b-move, .b-view { height: 20px; line-height: 23px; border-left: 2px solid #e9e5da; padding-left: 13px; }
.b-cluster { width: 97px; padding-left: 12px; }
.b-move { width: 229px; padding-left: 12px; }
.b-move em { color: #8b8456; margin-right: 7px; }
.b-view { padding-left: 20px; letter-spacing: 0; }
.workspace { height: 499px; flex: none; display: flex; }
.canvas-col { width: 792px; margin-top: 1px; border-top: 1px solid #8c8c96; border-right: 1px solid #77777f; }
.canvas-row { display: flex; height: 479px; }
.vscroll { width: 16px; background: #f0f0f0; padding-top: 4px; display: flex; flex-direction: column; align-items: center; }
.vthumb { width: 15px; height: 106px; margin-top: 3px; background: #cdcdcd; padding: 48px 3px; }
.vthumb i { display: block; width: 9px; height: 10px; background: #f0f0f0; }
.flip { margin-top: auto; transform: rotate(180deg); }
.dev { font: 11px "DejaVu Sans", sans-serif; }
.note { font: 11px "DejaVu Sans Condensed", "DejaVu Sans", sans-serif; }
.hscroll { height: 18px; display: flex; align-items: center; background: #f0f0f0; padding: 0 4px; }
.canvas-col .hscroll { padding-bottom: 1px; }
.hscroll .left { transform: rotate(-90deg); }
.hscroll .right { transform: rotate(90deg); margin-left: auto; }
.hthumb { width: 285px; height: 15px; margin-left: 4px; background: #cdcdcd; padding: 3px 136px; }
.hthumb i { display: block; width: 11px; height: 9px; background: #f0f0f0; }
.canvas-col .hscroll .right { margin-right: 17px; }
.side { width: 69px; background: linear-gradient(#ebebeb 393px, #c9c9c9 394px, #b5b5b5); padding: 12px 1px 0 1px; }
.side button { display: flex; align-items: center; justify-content: center; border: 1px solid transparent; background: none; padding: 0; width: 67px; height: 38px; margin: 0 0 2px; }
.side .sel { border-color: #04549a; background: #cbe3f7; }
.side .shape { justify-content: flex-start; padding-left: 11px; }
.side .mail { margin: 0; }
.side .pdu-simple { border-top: 1px solid #999; height: 54px; margin-top: 9px; padding-top: 8px; }
.side .pdu-complex { height: 42px; margin-top: -5px; }
.t-bar.bottom { height: 25px; line-height: 20px; }
.t-bar.bottom span { padding-top: 1px; }
.time { margin: 0 5px 0 16px; width: 108px; height: 20px; border-right: 2px solid #000; }
.power { margin-right: 7px; }
.lower { height: 99px; flex: none; display: flex; background: #fbfbfb; letter-spacing: .1px; }
.families { width: 175px; padding: 12px 5px 0; }
.fam-row { display: flex; align-items: center; }
.r1 { height: 22px; padding-left: 10px; gap: 7px; }
.fam-bolt { margin-left: -2px; }
.r2 { height: 30px; padding-left: 9px; gap: 5px; margin-top: 3px; }
.fam-name { height: 15px; margin-top: 7px; border: 1px solid #000; text-align: center; line-height: 13px; }
.devices { width: 252px; border: 1px solid #8a8a92; background: #f4f3ef; }
.dev-row { display: flex; gap: 9px; padding: 13px 0 0 4px; height: 66px; overflow: hidden; }
.key { width: 36px; height: 36px; border: 1px solid #979797; border-radius: 6px; background: #e8e8e8; display: flex; align-items: center; justify-content: center; flex: none; }
.hscroll.small { height: 17px; }
.small .hthumb { width: 108px; padding: 3px 49px; margin-left: 3px; }
.devices .small { padding: 0 3px; }
.copper { margin-top: 1px; height: 13px; border-top: 1px solid #000; text-align: center; background: #fff; line-height: 12px; letter-spacing: .25px; }
.scenario { width: 162px; padding: 7px 6px 0 7px; letter-spacing: .2px; }
.sc-row { display: flex; gap: 4px; align-items: center; padding-left: 3px; height: 24px; }
.combo { width: 118px; height: 20px; border: 1px solid #777; background: #fff; display: flex; align-items: center; justify-content: space-between; padding: 0 4px 0 5px; }
.sc-btns { display: flex; gap: 2px; margin: 7px 0 6px; }
.btn { width: 73px; height: 21px; background: #e1e1e1; border: 1px solid #adadad; display: flex; align-items: center; justify-content: center; }
.btn.wide { width: 148px; height: 26px; }
.pdu { width: 264px; height: 98px; margin-top: 1px; border: 1px solid #828790; background: #fff; overflow: hidden; display: flex; flex-direction: column; }
.pdu-row { height: 22px; flex: none; display: grid; grid-template-columns: 36px 79px 56px 84px 8px; align-items: center; overflow: hidden; }
.pdu-row span { padding-left: 2px; overflow: hidden; }
.pdu-row svg { margin-left: -1px; }
.pdu-row.head { height: 19px; }
.pdu-row.head span { padding-left: 4px; line-height: 21px; border-right: 1px solid #e0e0e0; }
.pdu-row.head span:last-child { border: 0; padding-left: 2px; }
.odd { background: #f0f0f0; }
.pdu .hscroll { margin-top: 16px; }
.pdu .hscroll .hthumb { width: 96px; padding: 3px 43px; margin-left: 3px; }
.logical { position: absolute; left: 0; top: 82px; }
.realtime { position: absolute; left: 751px; top: 561px; }
.tabname { font: bold 15px "DejaVu Sans", sans-serif; }

/* Taskbar */
.taskbar { position: absolute; left: 0; top: 728px; width: 1366px; height: 40px; background: rgba(0,0,0,.85); display: flex; color: #fff; }
.tb { width: 48px; height: 40px; margin-right: 1px; display: flex; align-items: center; justify-content: center; }
.tb:nth-child(-n+3) { margin-right: 0; }
.tb:nth-child(3) { margin-right: 3px; }
.run { border-bottom: 2px solid #76b9ed; }
.b1, .b2, .b3 { width: 40px; margin: 0 5px 0 4px; }
.active { background: rgba(110,110,110,.5); }
.line { background: rgba(255,136,46,.62); border-color: #ff7800; }
.tray { margin-left: auto; display: flex; align-items: center; }
.lang { margin-left: 7px; width: 21px; letter-spacing: -.3px; }
.clock { margin-left: 12px; width: 60px; display: flex; flex-direction: column; align-items: center; line-height: 18px; font-size: 12px; letter-spacing: -.45px; }
.notif { margin-left: 16px; margin-top: 2px; }
.peek { width: 1px; height: 40px; margin: 0 4px 0 10px; background: #777; }
.ntext { font: 10.5px "Open Sans", sans-serif; fill: #fff; }
.linetext { font: bold 5px "DejaVu Sans", sans-serif; fill: #01b901; }
```
